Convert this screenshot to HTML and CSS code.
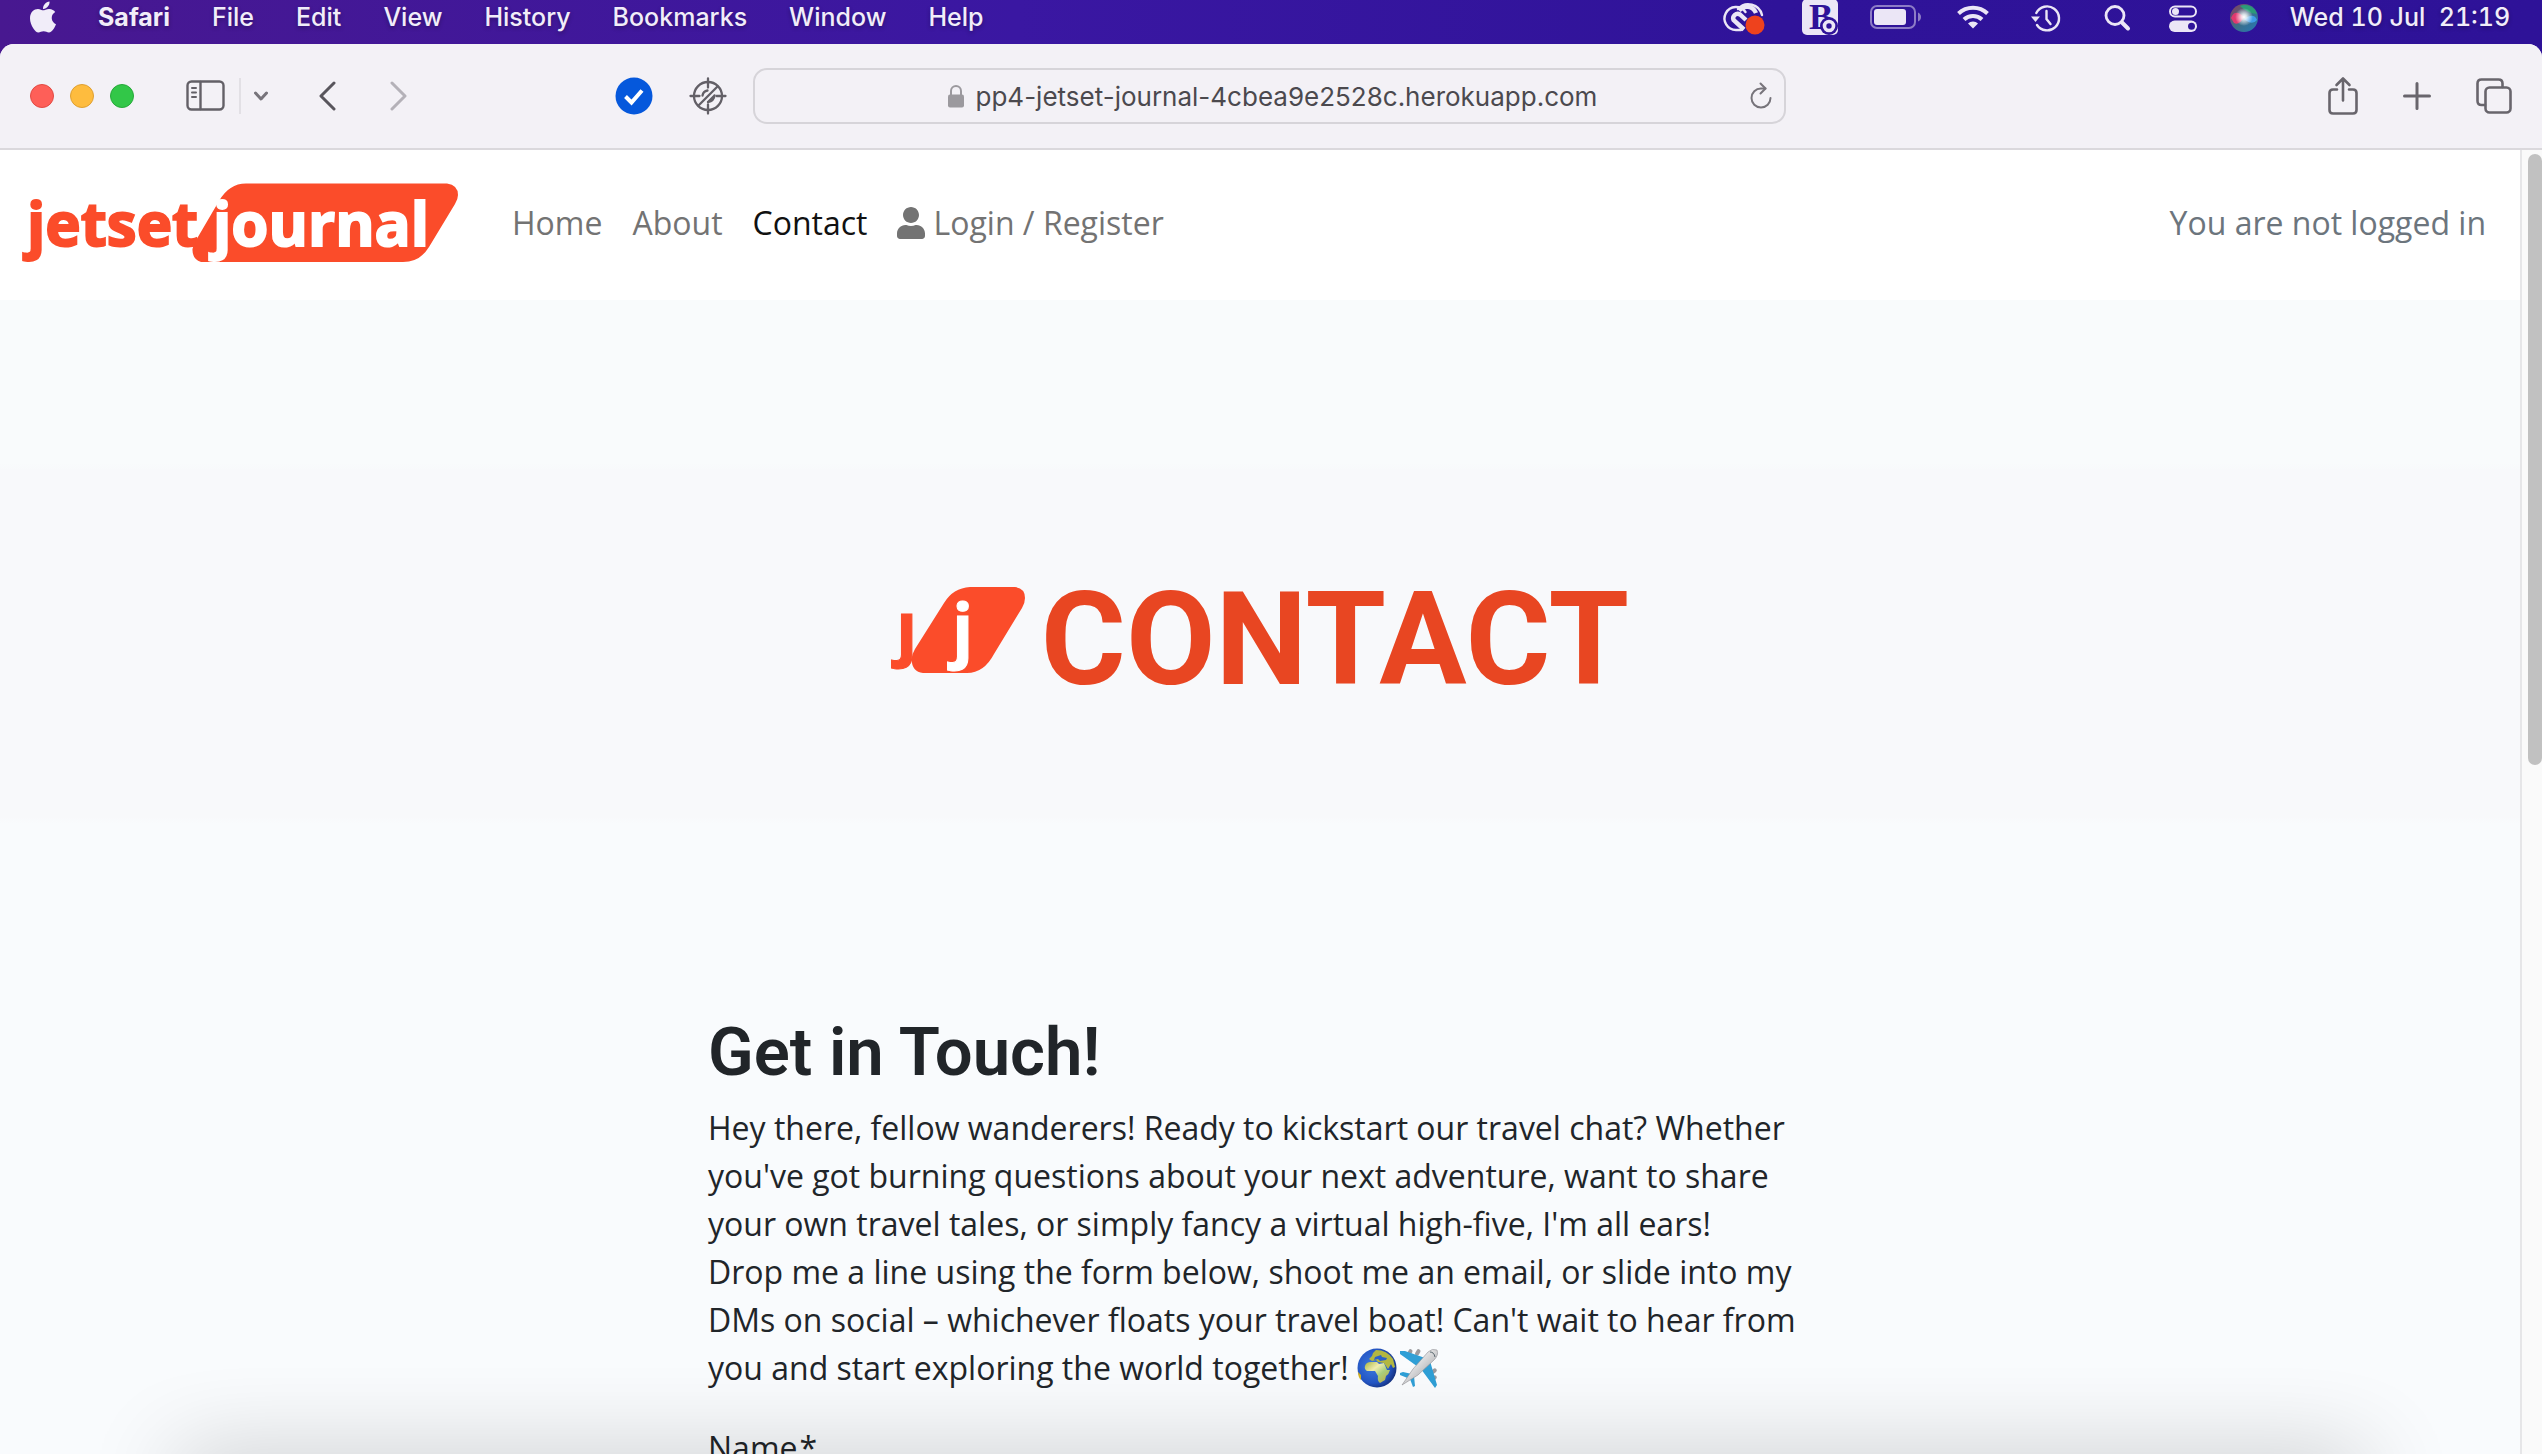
FILE: index.html
```html
<!DOCTYPE html>
<html lang="en">
<head>
<meta charset="utf-8">
<title>Contact - Jetset Journal</title>
<link rel="stylesheet" href="styles.css">
</head>
<body class="desktop">
<header class="menubar">
  <nav class="menubar-menus" aria-label="Menu bar">
    <svg class="apple" viewBox="4 32 376 448" aria-hidden="true"><path d="M318.7 268.7c-.2-36.7 16.4-64.4 50-84.8-18.8-26.9-47.2-41.7-84.7-44.6-35.5-2.8-74.3 20.7-88.5 20.7-15 0-49.4-19.7-76.4-19.7C63.3 141.2 4 184.8 4 273.5q0 39.3 14.4 81.2c12.8 36.7 59 126.7 107.2 125.2 25.2-.6 43-17.9 75.8-17.9 31.8 0 48.3 17.9 76.4 17.9 48.6-.7 90.4-82.5 102.6-119.3-65.2-30.7-61.7-90-61.7-91.9zm-56.6-164.2c27.3-32.4 24.8-61.9 24-72.5-24.1 1.4-52 16.4-67.9 34.9-17.5 19.8-27.8 44.3-25.6 71.9 26.1 2 49.9-11.4 69.5-34.3z"/></svg>
    <button class="menu menu-app">Safari</button>
    <button class="menu">File</button>
    <button class="menu">Edit</button>
    <button class="menu">View</button>
    <button class="menu">History</button>
    <button class="menu">Bookmarks</button>
    <button class="menu">Window</button>
    <button class="menu">Help</button>
  </nav>
  <div class="menubar-status">
    <svg class="status-wide" viewBox="0 0 52 36" aria-hidden="true">
      <g fill="none" stroke="#ebe6f6" stroke-width="2.4" stroke-linecap="round"><path d="M23 31H18A11.5 11.5 0 1 1 27.5 13"/><path d="M20 10A14 14 0 0 1 44 16"/></g>
      <g fill="none" stroke="#ebe6f6" stroke-width="4.4"><path d="M26 30.500L15.500 21A4.500 4.500 0 0 1 22 15.500L28 21"/><path d="M21 11.500A10 10 0 0 1 38 14"/></g>
      <circle cx="37" cy="26" r="9.500" fill="#ee421d"/>
    </svg>
    <svg class="status-wide" viewBox="0 0 52 36" aria-hidden="true">
      <rect x="8" y="0" width="36" height="36" rx="5" fill="#ebe6f6"/>
      <text class="badge-letter" x="15" y="30">B</text>
      <circle cx="35" cy="27" r="9" fill="#2f1399"/><circle cx="35" cy="27" r="4.500" fill="none" stroke="#ebe6f6" stroke-width="3.600"/>
    </svg>
    <svg class="status-wide" viewBox="0 0 52 36" aria-hidden="true">
      <rect x="1" y="7" width="44" height="22" rx="6" fill="none" stroke="#8d7cc6" stroke-width="2"/>
      <rect x="4" y="10" width="32" height="16" rx="3" fill="#ebe6f6"/>
      <path d="M48 13.500q3 1.500 3 4.500t-3 4.500z" fill="#8d7cc6"/>
    </svg>
    <svg class="status-wifi" viewBox="0 0 54 36" aria-hidden="true">
      <g fill="none" stroke="#ebe6f6" stroke-width="4"><path d="M12.500 14.500a21 21 0 0 1 29 0"/><path d="M18 20.500a13 13 0 0 1 18 0"/></g>
      <path d="M22 24.500a7 7 0 0 1 10 0L27 29.500z" fill="#ebe6f6"/>
    </svg>
    <svg class="status-clock" viewBox="0 0 44 36" aria-hidden="true">
      <g fill="none" stroke="#ebe6f6" stroke-width="2.400" stroke-linecap="round"><path d="M12.300 14A12 12 0 1 1 13 26"/><path d="M22.500 12v8l4 5"/></g>
      <path d="M7 17.500h9L11.500 23z" fill="#ebe6f6"/>
    </svg>
    <svg class="status-search" viewBox="0 0 50 36" aria-hidden="true"><g fill="none" stroke="#ebe6f6" stroke-linecap="round"><circle cx="23" cy="16.500" r="9" stroke-width="2.800"/><path d="M30 23.500l6 6" stroke-width="4"/></g></svg>
    <svg class="status-control" viewBox="0 0 34 36" aria-hidden="true">
      <rect x="4" y="7.500" width="26" height="10" rx="5" fill="none" stroke="#ebe6f6" stroke-width="2"/><circle cx="9.500" cy="12.500" r="3.500" fill="#ebe6f6"/>
      <rect x="3" y="21.500" width="28" height="11.500" rx="5.700" fill="#ebe6f6"/><circle cx="25.500" cy="27.200" r="3.500" fill="#2f1399"/>
    </svg>
    <svg class="status-siri" viewBox="0 0 40 36" aria-hidden="true">
      <defs>
        <radialGradient id="siriGlow"><stop offset="0" stop-color="#fff"/><stop offset=".3" stop-color="#fff" stop-opacity=".8"/><stop offset="1" stop-color="#fff" stop-opacity="0"/></radialGradient>
        <linearGradient id="siriBody" x1="0" y1="0" x2="1" y2="1"><stop offset="0" stop-color="#8c3a5c"/><stop offset=".5" stop-color="#3d6e86"/><stop offset="1" stop-color="#2478b8"/></linearGradient>
      </defs>
      <circle cx="20" cy="19" r="14" fill="url(#siriBody)"/>
      <path d="M16 7a13 13 0 0 1 17 8q-10-1-17-8z" fill="#2b9a78"/>
      <path d="M7 19q4-10 13-1-5 9-10 6z" fill="#e0386f"/>
      <path d="M20 20q10-7 13 1-5 6-13-1z" fill="#3f9be8"/>
      <circle cx="20" cy="18" r="9" fill="url(#siriGlow)"/>
    </svg>
    <time class="clock" datetime="2024-07-10T21:19">Wed 10 Jul&nbsp; 21:19</time>
  </div>
</header>

<div class="window">
  <div class="toolbar">
    <div class="toolbar-left">
      <div class="toolbar-group">
        <div class="lights">
          <button class="light light-close" aria-label="Close"></button>
          <button class="light light-min" aria-label="Minimise"></button>
          <button class="light light-zoom" aria-label="Zoom"></button>
        </div>
        <button class="tool" aria-label="Show sidebar"><svg width="40" height="32" viewBox="0 0 40 32"><g fill="none" stroke="#636067" stroke-width="2.400" stroke-linecap="round"><rect x="1.500" y="1.500" width="36" height="28" rx="4"/><path d="M14.500 2v27"/><path d="M6 8h4M6 12.500h4M6 17h4" stroke-width="2"/></g></svg></button>
        <span class="divider"></span>
        <button class="tool" aria-label="Tab groups"><svg width="14" height="10" viewBox="0 0 14 10"><path d="M1.500 2L7 8l5.500-6" fill="none" stroke="#77747b" stroke-width="3" stroke-linecap="round" stroke-linejoin="round"/></svg></button>
        <button class="tool tool-back" aria-label="Back"><svg width="18" height="30" viewBox="0 0 18 30"><path d="M16 2L3 15l13 13" fill="none" stroke="#58555c" stroke-width="3" stroke-linecap="round" stroke-linejoin="round"/></svg></button>
        <button class="tool tool-forward" aria-label="Forward"><svg width="18" height="30" viewBox="0 0 18 30"><path d="M2 2l13 13L2 28" fill="none" stroke="#b4b1b8" stroke-width="3" stroke-linecap="round" stroke-linejoin="round"/></svg></button>
      </div>
      <div class="toolbar-extensions">
        <button class="tool" aria-label="Site is safe"><svg width="38" height="38" viewBox="0 0 38 38"><circle cx="19" cy="19" r="18.500" fill="#0558dc"/><path d="M10.500 19.500l6 6L27 13.500" fill="none" stroke="#fff" stroke-width="4"/></svg></button>
        <button class="tool" aria-label="Tracker blocker"><svg width="38" height="38" viewBox="0 0 38 38"><g fill="none" stroke="#636067" stroke-width="2.300" stroke-linecap="round"><circle cx="19" cy="19" r="14"/><path d="M19 1.500v9M19 27.500v9M1.500 19h9M27.500 19h9"/><path d="M9.500 28.500L28.500 9.500M13.500 18.500a6 6 0 0 1 5-5M14.500 23.500l9-9M19 25q6-1 6.500-6.500M19 25l6.500-6.500"/></g></svg></button>
      </div>
    </div>
    <div class="address">
      <span class="address-center">
        <svg width="16" height="24" viewBox="0 0 16 24" aria-hidden="true"><rect x="0" y="10.500" width="16" height="13" rx="2" fill="#9b999e"/><path d="M3 11V7a5 5 0 0 1 10 0v4" fill="none" stroke="#9b999e" stroke-width="2"/></svg>
        <input class="address-input" type="text" aria-label="Address" value="pp4-jetset-journal-4cbea9e2528c.herokuapp.com">
      </span>
      <button class="tool" aria-label="Reload"><svg width="22" height="28" viewBox="0 0 22 28"><g fill="none" stroke="#77747b" stroke-width="2" stroke-linecap="round" stroke-linejoin="round"><path d="M20.500 16A9.500 9.500 0 1 1 11 6.500h4.500"/><path d="M10.500 1.500l5 5-5 5"/></g></svg></button>
    </div>
    <div class="toolbar-right">
      <button class="tool" aria-label="Share"><svg width="30" height="40" viewBox="0 0 30 40"><g fill="none" stroke="#68656c" stroke-width="2.600" stroke-linecap="round" stroke-linejoin="round"><path d="M9 13.500H5Q1.500 13.500 1.500 17V34Q1.500 37.500 5 37.500H25Q28.500 37.500 28.500 34V17Q28.500 13.500 25 13.500H21"/><path d="M15 24.500V2.500M8.500 9L15 2.500 21.500 9"/></g></svg></button>
      <button class="tool" aria-label="New tab"><svg width="28" height="28" viewBox="0 0 28 28"><path d="M14 1.500v25M1.500 14h25" stroke="#68656c" stroke-width="3" stroke-linecap="round"/></svg></button>
      <button class="tool" aria-label="Tab overview"><svg width="36" height="36" viewBox="0 0 36 36"><g fill="none" stroke="#68656c" stroke-width="2.600" stroke-linecap="round"><rect x="9.500" y="9.500" width="25" height="25" rx="4"/><path d="M9 27H5.500Q1.500 27 1.500 23V5.500Q1.500 1.500 5.500 1.500H22.500Q26.500 1.500 26.500 5.500V9"/></g></svg></button>
    </div>
  </div>

  <div class="viewport">
    <div class="page">
      <nav class="navbar" aria-label="Main">
        <a class="brand" href="#" aria-label="Jetset Journal">
          <svg class="logo" width="440" height="84" viewBox="20 182 440 84">
            <path fill="#fb4c2a" d="M246 184.500H447Q458 186 458 196Q458 200 455 205L429 248Q420 263 403 263H201Q192 260 192.500 250Q193 247 195 243L219 202Q229 184.500 246 184.500z"/>
            <text class="logo-text logo-orange" x="27" y="247">jetset</text>
            <text class="logo-text logo-white" x="213" y="247">journal</text>
          </svg>
        </a>
        <ul class="nav-links">
          <li><a class="nav-link" href="#">Home</a></li>
          <li><a class="nav-link" href="#">About</a></li>
          <li><a class="nav-link nav-active" href="#" aria-current="page">Contact</a></li>
          <li><a class="nav-link" href="#"><svg width="28" height="32" viewBox="0 0 448 512" aria-hidden="true"><path fill="#737373" d="M224 256c70.700 0 128-57.300 128-128S294.700 0 224 0 96 57.300 96 128s57.300 128 128 128zm89.600 32h-16.700c-22.200 10.200-46.900 16-72.900 16s-50.600-5.800-72.900-16h-16.700C60.200 288 0 348.200 0 422.400V464c0 26.500 21.500 48 48 48h352c26.500 0 48-21.500 48-48v-41.600c0-74.200-60.200-134.400-134.400-134.400z"/></svg>Login / Register</a></li>
        </ul>
        <span class="login-state">You are not logged in</span>
      </nav>
      <section class="hero">
        <h1 class="hero-title">
          <svg class="logo" width="140" height="106" viewBox="886 587 140 106" aria-hidden="true">
            <text class="mark-text logo-orange" x="895" y="652">ȷ</text>
            <path fill="#fb4c2a" d="M969 587H1014Q1024 588 1024 598Q1024 603 1021 608L993 654Q983 673 966 673H922Q911 672 910.500 659Q911 654 914 649L943 603Q952 588 969 587z"/>
            <text class="mark-text logo-white" x="951" y="654">j</text>
          </svg>
          CONTACT
        </h1>
      </section>
      <main class="content">
        <h2 class="content-title">Get in Touch!</h2>
        <p class="content-text">Hey there, fellow wanderers! Ready to kickstart our travel chat? Whether<br>you've got burning questions about your next adventure, want to share<br>your own travel tales, or simply fancy a virtual high-five, I'm all ears!<br>Drop me a line using the form below, shoot me an email, or slide into my<br>DMs on social – whichever floats your travel boat! Can't wait to hear from<br>you and start exploring the world together! <svg class="emoji" viewBox="0 0 40 40" role="img" aria-label="Globe">
            <defs><radialGradient id="sea" cx=".4" cy=".45" r=".62"><stop offset="0" stop-color="#3d7be0"/><stop offset=".7" stop-color="#2456c4"/><stop offset="1" stop-color="#16307c"/></radialGradient>
            <linearGradient id="land" x1="0" y1="0" x2="1" y2="1"><stop offset="0" stop-color="#a8b53e"/><stop offset=".35" stop-color="#f0edb0"/><stop offset=".6" stop-color="#a9cf7e"/><stop offset="1" stop-color="#c6a93a"/></linearGradient></defs>
            <circle cx="20" cy="20" r="19.500" fill="url(#sea)"/>
            <path fill="url(#land)" d="M8 18Q9 14 14 14L20 14 22 16 27 15 30 22 33 22Q32 26 29 28L28 32 23 35Q20 33 21 28L18 23 10 23Q7 21 8 18z"/>
            <path fill="#b3b740" d="M12 11l3-3 1-3 3-3q11 0 17 9l2 8-2 1-2-4-3 5-4-6-6-1-2-2-4 1z"/>
            <path fill="#2a61c8" d="M18 9l6-2 1 2 5 1-1 2-6 1-2-2-4 1z"/>
            <path fill="#d4b21f" d="M1 24l3 3v5q-3-3-3-8z"/>
          </svg><svg class="emoji" viewBox="0 0 40 40" role="img" aria-label="Aeroplane">
            <defs><linearGradient id="hull" x1="0" y1="0" x2="1" y2="1"><stop offset=".2" stop-color="#fff"/><stop offset=".8" stop-color="#a9a9ac"/></linearGradient></defs>
            <g fill="#9a9a9e"><rect x="9" y="1" width="4" height="7" rx="2" transform="rotate(30 11 4)"/><rect x="17" y="1" width="4" height="7" rx="2" transform="rotate(30 19 4)"/><rect x="33" y="20" width="4" height="7" rx="2" transform="rotate(50 35 23)"/><rect x="33" y="27" width="4" height="7" rx="2" transform="rotate(50 35 30)"/></g>
            <path fill="#2f9fd6" d="M1 3l5 0 23 8 2 2 7 24-2 3L22 21 1 6zM1 25l3-1 9 2 2 2 1 10-2 1-3-8L1 27z"/>
            <path fill="url(#hull)" stroke="#8f8f93" stroke-width=".6" d="M3 37L14 21 29 4Q33 0 38 2 40 7 35 12L19 27z"/>
            <path fill="none" stroke="#58666e" d="M31 4q4 0 5 5"/>
          </svg></p>
        <form class="contact-form">
          <label class="field-label" for="name">Name<span class="required">*</span></label>
          <input class="field-input" id="name" type="text" required>
        </form>
      </main>
    </div>
    <div class="scrollbar"><div class="scrollbar-thumb"></div></div>
    <div class="dock-shadow"></div>
  </div>
</div>
</body>
</html>
```
FILE: styles.css
```css
* { box-sizing: border-box; }

.desktop {
  display: flex;
  flex-direction: column;
  height: 100vh;
  margin: 0;
  overflow: hidden;
  background: linear-gradient(90deg, #481890, #3a17a2 40%, #2f1399 70%, #2e1298);
  font-family: "Open Sans", "Noto Sans", sans-serif;
  color: #212529;
}

button {
  margin: 0;
  padding: 0;
  border: 0;
  background: none;
}

/* System menu bar */
.menubar {
  display: flex;
  flex: none;
  justify-content: space-between;
  height: 44px;
  padding: 0 30px 10px;
  color: #f1edf9;
  font: 500 25px/34px Inter, "Liberation Sans", sans-serif;
}
.menubar-menus { display: flex; align-items: center; gap: 42px; }
.menubar-status { display: flex; align-items: center; gap: 24px; }
.menubar-status svg { flex: none; height: 36px; overflow: visible; }
.apple { width: 26px; height: 32px; fill: #f1edf9; }
.menu {
  color: inherit;
  font: inherit;
  text-shadow: 0 2px 4px rgba(0, 0, 0, .3);
}
.menu-app { font-weight: 700; }
.status-wide { width: 52px; }
.status-wifi { width: 54px; }
.status-clock { width: 44px; }
.status-search { width: 50px; }
.status-control { width: 34px; }
.status-siri { width: 40px; }
.badge-letter { fill: #2f1399; font: 700 36px "Liberation Serif", serif; }
.clock {
  width: 224px;
  font-variant-numeric: tabular-nums;
  text-align: center;
  white-space: nowrap;
  text-shadow: 0 2px 4px rgba(0, 0, 0, .3);
}

/* Browser window */
.window {
  display: flex;
  flex: 1;
  flex-direction: column;
  min-height: 0;
  overflow: hidden;
  border-radius: 14px 14px 0 0;
  background: #fff;
}
.toolbar {
  display: grid;
  flex: none;
  grid-template-columns: 753fr 1033fr 756fr;
  align-items: center;
  height: 106px;
  border-bottom: 2px solid #dad8dc;
  background: #f3f1f6;
}
.toolbar-left {
  display: flex;
  align-items: center;
  justify-content: space-between;
  padding: 0 26px 0 30px;
}
.toolbar-group { display: flex; align-items: center; }
.lights { display: flex; gap: 16px; margin-right: 52px; }
.light { width: 24px; height: 24px; border-radius: 50%; }
.light-close { background: #fe5f58; border: 1px solid #e24a44; }
.light-min { background: #febc3e; border: 1px solid #dfa032; }
.light-zoom { background: #32c748; border: 1px solid #27a93a; }
.tool { display: flex; }
.divider { width: 2px; height: 36px; margin: 0 13px; background: #e2e0e5; }
.tool-back { margin-left: 50px; }
.tool-forward { margin-left: 54px; }
.toolbar-extensions { display: flex; gap: 36px; }
.address {
  display: flex;
  align-items: center;
  height: 56px;
  padding: 0 12px;
  border: 2px solid #d6d4d9;
  border-radius: 14px;
}
.address-center {
  display: flex;
  flex: 1;
  align-items: center;
  justify-content: center;
  gap: 12px;
  padding-left: 30px;
}
.address-input {
  width: 624px;
  padding: 2px 0 0;
  border: 0;
  background: none;
  color: #4b494e;
  font: 400 26px/32px Inter, "Liberation Sans", sans-serif;
}
.toolbar-right {
  display: flex;
  align-items: center;
  justify-content: flex-end;
  gap: 45px;
  padding-right: 30px;
}

/* Web page */
.viewport {
  position: relative;
  display: flex;
  flex: 1;
  min-height: 0;
  overflow: hidden;
}
.page { flex: 1; min-width: 0; background: #f9fbfd; }
.navbar {
  display: flex;
  align-items: center;
  height: 150px;
  padding: 0 34px 4px 20px;
  background: #fff;
  font-size: 32px;
  line-height: 48px;
}
.brand { display: flex; }
.logo { overflow: visible; }
.logo-text {
  font: 700 60px "Open Sans", sans-serif;
  stroke-width: 2px;
}
.mark-text { font: 700 70px "Open Sans", sans-serif; }
.logo-orange { fill: #fb4c2a; stroke: #fb4c2a; }
.logo-white { fill: #fff; stroke: #fff; }
.nav-links {
  display: flex;
  gap: 30px;
  margin: 0 auto 0 52px;
  padding: 0;
  list-style: none;
}
.nav-link {
  display: flex;
  align-items: center;
  gap: 8px;
  color: #737373;
  text-decoration: none;
}
.nav-active { color: #111; }
.login-state { color: #6c757d; }
.hero {
  display: flex;
  justify-content: center;
  padding: 264px 0;
  background: linear-gradient(#f9fbfc 24%, #f8f9fb 25%, #f8f9fb 76%, #f9fbfd 77%);
}
.hero-title {
  display: flex;
  align-items: center;
  gap: 14px;
  margin: 0;
  padding-right: 4px;
  color: #e84622;
  font: 700 130px/152px Roboto, sans-serif;
}
.content { width: 1104px; max-width: 100%; margin: 0 auto; padding-top: 32px; }
.content-title {
  margin: 0 0 12px;
  font: 600 67px/80px Roboto, sans-serif;
}
.content-text {
  margin: 0 0 32px;
  font-size: 32px;
  line-height: 48px;
  white-space: nowrap;
}
.emoji { width: 40px; height: 40px; margin-right: 2px; vertical-align: -8px; }
.contact-form { display: flex; flex-direction: column; gap: 16px; }
.field-label { font-size: 32px; line-height: 48px; }
.required { margin-left: 2px; }
.field-input {
  height: 76px;
  border: 2px solid #dee2e6;
  border-radius: 12px;
}

.scrollbar {
  display: flex;
  flex: none;
  justify-content: flex-end;
  width: 22px;
  padding-top: 4px;
  border-left: 2px solid #e6e6e8;
  background: #fafafa;
}
.scrollbar-thumb { width: 14px; height: 47%; border-radius: 7px; background: #c1c1c1; }

/* Soft shadow cast by the Dock below the screen edge */
.dock-shadow {
  position: absolute;
  right: 7%;
  bottom: -48px;
  left: 7%;
  height: 40px;
  box-shadow: 0 0 90px rgba(0, 0, 0, .3);
}
```
